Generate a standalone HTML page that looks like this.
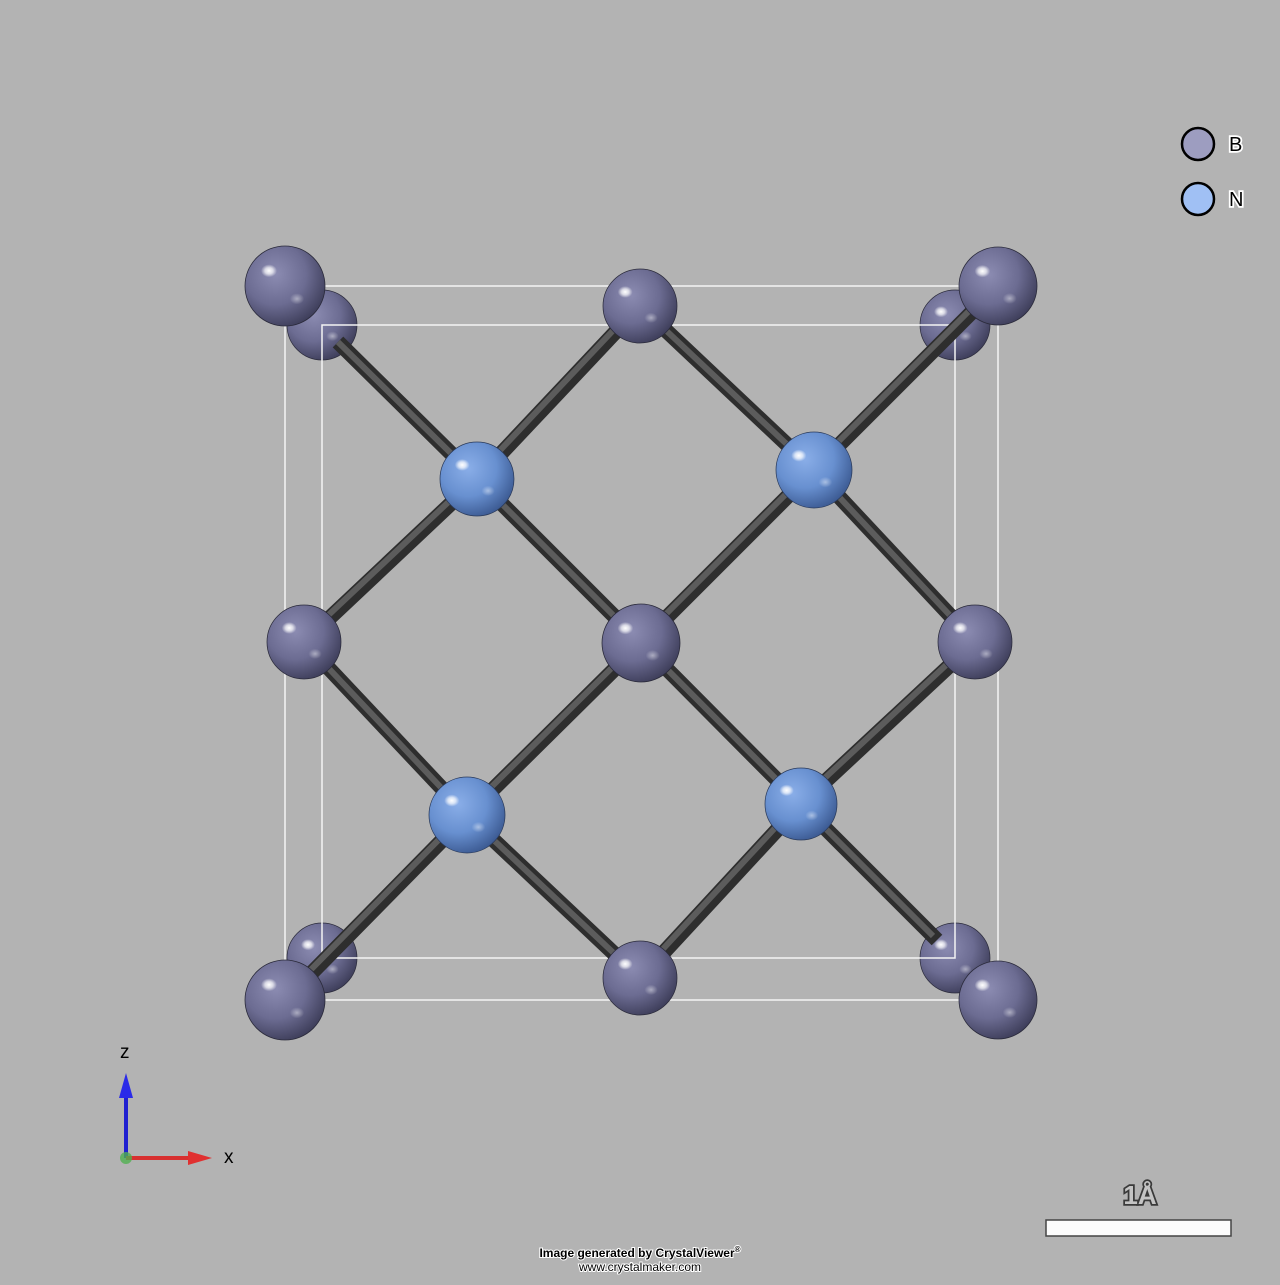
<!DOCTYPE html>
<html><head><meta charset="utf-8"><style>
html,body{margin:0;padding:0;background:#b3b3b3;}
svg{display:block}
</style></head><body>
<svg width="1280" height="1285" viewBox="0 0 1280 1285" xmlns="http://www.w3.org/2000/svg">
<defs>
<radialGradient id="gB" cx="0.38" cy="0.35" r="0.7">
<stop offset="0" stop-color="#8c8cb2"/>
<stop offset="0.55" stop-color="#6c6c92"/>
<stop offset="1" stop-color="#3c3c58"/>
</radialGradient>
<radialGradient id="gN" cx="0.38" cy="0.35" r="0.7">
<stop offset="0" stop-color="#8aaee8"/>
<stop offset="0.55" stop-color="#6890d0"/>
<stop offset="1" stop-color="#3a5890"/>
</radialGradient>
<radialGradient id="hl" cx="0.5" cy="0.5" r="0.5">
<stop offset="0" stop-color="#fff" stop-opacity="1"/>
<stop offset="0.5" stop-color="#fff" stop-opacity="0.7"/>
<stop offset="1" stop-color="#fff" stop-opacity="0"/>
</radialGradient>
<radialGradient id="hl2" cx="0.5" cy="0.5" r="0.5">
<stop offset="0" stop-color="#fff" stop-opacity="0.45"/>
<stop offset="1" stop-color="#fff" stop-opacity="0"/>
</radialGradient>
<g id="atomB"><circle r="1" fill="url(#gB)" stroke="#2a2a3a" stroke-width="0.02"/><ellipse cx="-0.4" cy="-0.38" rx="0.2" ry="0.16" fill="url(#hl)"/><ellipse cx="0.3" cy="0.32" rx="0.18" ry="0.14" fill="url(#hl2)"/></g>
<g id="atomN"><circle r="1" fill="url(#gN)" stroke="#2a3a5a" stroke-width="0.02"/><ellipse cx="-0.4" cy="-0.38" rx="0.2" ry="0.16" fill="url(#hl)"/><ellipse cx="0.3" cy="0.32" rx="0.18" ry="0.14" fill="url(#hl2)"/></g>
</defs>
<rect width="1280" height="1285" fill="#b3b3b3"/>
<!-- back atoms -->
<use href="#atomB" transform="translate(322,325) scale(35)"/>
<use href="#atomB" transform="translate(955,325) scale(35)"/>
<use href="#atomB" transform="translate(322,958) scale(35)"/>
<use href="#atomB" transform="translate(955,958) scale(35)"/>
<!-- box -->
<g fill="none" stroke="#f4f4f4" stroke-width="1.5">
<rect x="322" y="325" width="633" height="633"/>
<rect x="285" y="286" width="713" height="714"/>
</g>
<!-- bonds -->
<g stroke-linecap="butt">
<g stroke="#2e2e2e" stroke-width="15">
<path d="M477,479L338,342M477,479L640,306M477,479L304,642M477,479L641,643
M814,470L640,306M814,470L998,286M814,470L975,642M814,470L641,643
M467,815L304,642M467,815L285,1000M467,815L640,978M467,815L641,643
M801,804L641,643M801,804L975,642M801,804L640,978M801,804L937,940"/>
</g>
<g stroke="#5c5c5c" stroke-width="6" transform="translate(-2,-2)">
<path d="M477,479L340,344M477,479L640,306M477,479L304,642M477,479L641,643
M814,470L640,306M814,470L998,286M814,470L975,642M814,470L641,643
M467,815L304,642M467,815L285,1000M467,815L640,978M467,815L641,643
M801,804L641,643M801,804L975,642M801,804L640,978M801,804L935,938"/>
</g>
</g>
<!-- front atoms -->
<use href="#atomB" transform="translate(640,306) scale(37)"/>
<use href="#atomB" transform="translate(640,978) scale(37)"/>
<use href="#atomB" transform="translate(304,642) scale(37)"/>
<use href="#atomB" transform="translate(975,642) scale(37)"/>
<use href="#atomB" transform="translate(641,643) scale(39)"/>
<use href="#atomN" transform="translate(477,479) scale(37)"/>
<use href="#atomN" transform="translate(814,470) scale(38)"/>
<use href="#atomN" transform="translate(467,815) scale(38)"/>
<use href="#atomN" transform="translate(801,804) scale(36)"/>
<use href="#atomB" transform="translate(285,286) scale(40)"/>
<use href="#atomB" transform="translate(998,286) scale(39)"/>
<use href="#atomB" transform="translate(285,1000) scale(40)"/>
<use href="#atomB" transform="translate(998,1000) scale(39)"/>
<!-- legend -->
<circle cx="1198" cy="144" r="16" fill="#9d9dc0" stroke="#000" stroke-width="2.5"/>
<circle cx="1198" cy="199" r="16" fill="#a0c0f4" stroke="#000" stroke-width="2.5"/>
<g font-family="Liberation Sans, sans-serif" font-size="20" fill="#000" stroke="#fff" stroke-width="3.5" paint-order="stroke">
<text x="1229" y="151">B</text>
<text x="1229" y="206">N</text>
</g>
<!-- axes -->
<text x="120" y="1058" font-family="Liberation Sans, sans-serif" font-size="19" fill="#000">z</text>
<text x="224" y="1163" font-family="Liberation Sans, sans-serif" font-size="19" fill="#000">x</text>
<line x1="126" y1="1158" x2="126" y2="1095" stroke="#2020d0" stroke-width="4"/>
<polygon points="126,1073 119,1098 133,1098" fill="#2a2ae8"/>
<line x1="126" y1="1158" x2="190" y2="1158" stroke="#d83030" stroke-width="4"/>
<polygon points="212,1158 188,1151 188,1165" fill="#e03030"/>
<circle cx="126" cy="1158" r="6" fill="#50b050" opacity="0.8"/>
<!-- scale bar -->
<text x="1140" y="1204" text-anchor="middle" font-family="Liberation Sans, sans-serif" font-weight="bold" font-size="26" fill="#c4c4c4" stroke="#3a3a3a" stroke-width="3.5" paint-order="stroke">1Å</text>
<rect x="1046" y="1220" width="185" height="16" fill="#fcfcfc" stroke="#444" stroke-width="1.5"/>
<!-- footer -->
<g font-family="Liberation Sans, sans-serif" fill="#000" stroke="#fff" stroke-width="2" paint-order="stroke" text-anchor="middle">
<text x="640" y="1257" font-size="12" font-weight="bold">Image generated by CrystalViewer<tspan font-size="8" dy="-5">®</tspan></text>
<text x="640" y="1271" font-size="12">www.crystalmaker.com</text>
</g>
</svg>
</body></html>
